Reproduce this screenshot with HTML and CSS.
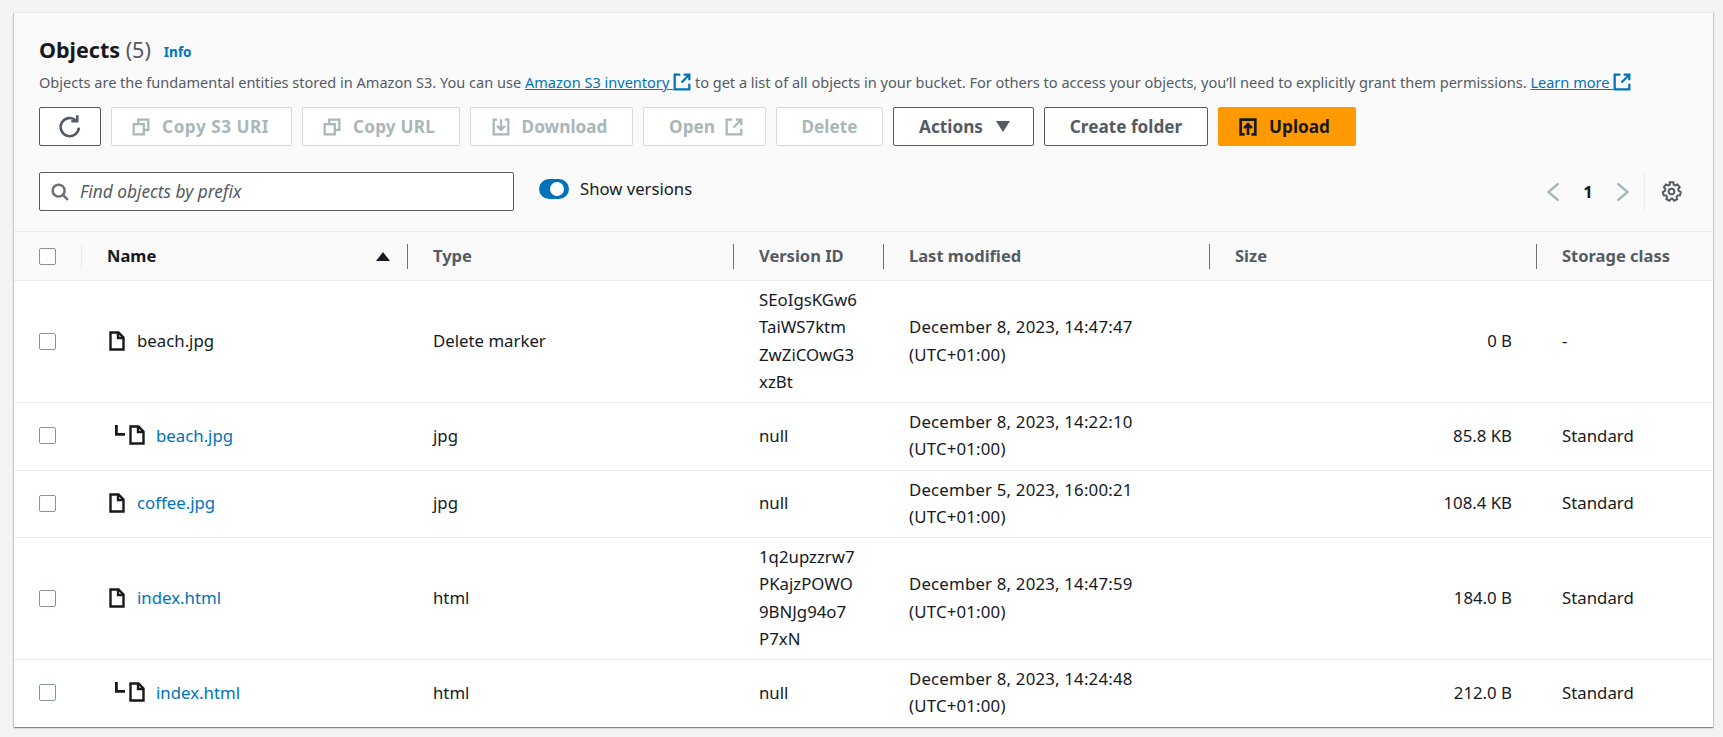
FILE: index.html
```html
<!DOCTYPE html>
<html lang="en">
  <head>
    <meta charset="UTF-8" />
    <meta name="viewport" content="width=device-width, initial-scale=1.0" />
    <title>Objects</title>
    <link rel="stylesheet" href="styles.css">
  </head>
  <body>
    <svg class="sprite" xmlns="http://www.w3.org/2000/svg">
      <symbol id="i-external" viewBox="0 0 16 16"><path d="M14.5 9.5v5h-13v-13h5M9.5 1.5h5v5M14 2L7.5 8.5"/></symbol>
      <symbol id="i-copy" viewBox="0 0 16 16"><path d="M1.5 5.5h9v9h-9zM5.5 5.5v-4h9v9h-4"/></symbol>
      <symbol id="i-download" viewBox="0 0 16 16"><path d="M4.5 1.5h-3v13h13v-13h-3M8 1v9M4.5 7L8 10.5 11.5 7"/></symbol>
      <symbol id="i-upload" viewBox="0 0 16 16"><path d="M5 14.5H1.5v-13h13v13H11M8 15V5.5M4.5 9L8 5.5 11.5 9"/></symbol>
      <symbol id="i-file" viewBox="0 0 16 20"><path d="M1.5 1.5h8l5 5v12h-13zM9 2v5h5.5"/></symbol>
      <symbol id="i-sub" viewBox="0 0 10 11"><path d="M1.4 0v9.4H10"/></symbol>
    </svg>

    <div class="card">
      <div class="card-head">
        <div class="title-row">
          <h1>Objects <span class="count">(5)</span></h1>
          <a class="info">Info</a>
        </div>
        <p class="desc">Objects are the fundamental entities stored in Amazon S3. You can use <a class="link">Amazon S3 inventory <svg class="ext"><use href="#i-external"/></svg></a> to get a list of all objects in your bucket. For others to access your objects, you’ll need to explicitly grant them permissions. <a class="link">Learn more <svg class="ext"><use href="#i-external"/></svg></a></p>

        <div class="toolbar">
          <button class="btn btn-refresh" aria-label="Refresh">
            <svg class="ic" viewBox="0 0 20 20"><path d="M16.8 10.5a7 7 0 1 1-2.3-5.6M15.6 1v4.6H11"/></svg>
          </button>
          <button class="btn off w-s3uri"><svg class="ic"><use href="#i-copy"/></svg>Copy S3 URI</button>
          <button class="btn off w-url"><svg class="ic"><use href="#i-copy"/></svg>Copy URL</button>
          <button class="btn off w-down"><svg class="ic"><use href="#i-download"/></svg>Download</button>
          <button class="btn off w-open">Open<svg class="ic"><use href="#i-external"/></svg></button>
          <button class="btn off w-del">Delete</button>
          <button class="btn w-act">Actions<span class="caret"></span></button>
          <button class="btn w-folder">Create folder</button>
          <button class="btn primary w-up"><svg class="ic"><use href="#i-upload"/></svg>Upload</button>
        </div>

        <div class="filter-row">
          <div class="search">
            <svg class="ic search-ic" viewBox="0 0 16 16"><circle cx="6.8" cy="6.8" r="5.3"/><path d="M10.6 10.6l4.4 4.4"/></svg>
            <span class="placeholder">Find objects by prefix</span>
          </div>
          <div class="toggle"><span class="knob"></span></div>
          <span class="toggle-label">Show versions</span>
          <div class="pager">
            <svg class="chev" viewBox="0 0 14 20"><path d="M12.5 1.5L2.5 10l10 8.5"/></svg>
            <span class="page-num">1</span>
            <svg class="chev" viewBox="0 0 14 20"><path d="M1.5 1.5l10 8.5-10 8.5"/></svg>
            <span class="pager-sep">
              <svg class="gear" viewBox="0 0 20 20"><circle cx="10" cy="10" r="2.7"/><path d="M8.3 1.3h3.4l.4 2.3 1.5.7 2.1-1 2.1 2.5-1.4 1.9.4 1.6 2 1.1-.7 3.2-2.3.2-1 1.3.6 2.3-2.9 1.4-1.4-1.9h-1.6l-1.4 1.9-2.9-1.4.6-2.3-1-1.3-2.3-.2-.7-3.2 2-1.1.4-1.6-1.4-1.9L4.8 3.3l2.1 1 1.5-.7z"/></svg>
            </span>
          </div>
        </div>
      </div>

      <table class="objects">
        <colgroup>
          <col class="c-check"><col class="c-name"><col class="c-type"><col class="c-version"><col class="c-date"><col class="c-size"><col class="c-class">
        </colgroup>
        <thead>
          <tr>
            <th><span class="box"></span></th>
            <th><div class="th-in first sorted">Name<span class="sort-up"></span></div></th>
            <th><div class="th-in">Type</div></th>
            <th><div class="th-in">Version ID</div></th>
            <th><div class="th-in">Last modified</div></th>
            <th><div class="th-in">Size</div></th>
            <th><div class="th-in">Storage class</div></th>
          </tr>
        </thead>
        <tbody>
          <tr>
            <td><span class="box"></span></td>
            <td><div class="name"><svg class="file"><use href="#i-file"/></svg>beach.jpg</div></td>
            <td>Delete marker</td>
            <td>SEoIgsKGw6<br>TaiWS7ktm<br>ZwZiCOwG3<br>xzBt</td>
            <td class="date">December 8, 2023, 14:47:47<br>(UTC+01:00)</td>
            <td class="num">0 B</td>
            <td>-</td>
          </tr>
          <tr>
            <td><span class="box"></span></td>
            <td><div class="name child"><svg class="sub"><use href="#i-sub"/></svg><svg class="file"><use href="#i-file"/></svg><a class="obj">beach.jpg</a></div></td>
            <td>jpg</td>
            <td>null</td>
            <td class="date">December 8, 2023, 14:22:10<br>(UTC+01:00)</td>
            <td class="num">85.8 KB</td>
            <td>Standard</td>
          </tr>
          <tr>
            <td><span class="box"></span></td>
            <td><div class="name"><svg class="file"><use href="#i-file"/></svg><a class="obj">coffee.jpg</a></div></td>
            <td>jpg</td>
            <td>null</td>
            <td class="date">December 5, 2023, 16:00:21<br>(UTC+01:00)</td>
            <td class="num">108.4 KB</td>
            <td>Standard</td>
          </tr>
          <tr>
            <td><span class="box"></span></td>
            <td><div class="name"><svg class="file"><use href="#i-file"/></svg><a class="obj">index.html</a></div></td>
            <td>html</td>
            <td>1q2upzzrw7<br>PKajzPOWO<br>9BNJg94o7<br>P7xN</td>
            <td class="date">December 8, 2023, 14:47:59<br>(UTC+01:00)</td>
            <td class="num">184.0 B</td>
            <td>Standard</td>
          </tr>
          <tr>
            <td><span class="box"></span></td>
            <td><div class="name child"><svg class="sub"><use href="#i-sub"/></svg><svg class="file"><use href="#i-file"/></svg><a class="obj">index.html</a></div></td>
            <td>html</td>
            <td>null</td>
            <td class="date">December 8, 2023, 14:24:48<br>(UTC+01:00)</td>
            <td class="num">212.0 B</td>
            <td>Standard</td>
          </tr>
        </tbody>
      </table>
    </div>
  </body>
</html>
```

FILE: styles.css
```css
* {
  box-sizing: border-box;
}

html,
body {
  height: 100%;
}

body {
  margin: 0;
  padding: 12px 10px 0 14px;
  background-color: #f2f3f3;
  color: #16191f;
  font-family: "Noto Sans", "Open Sans", sans-serif;
  font-size: 16px;
  overflow: hidden;
}

.sprite {
  width: 0;
  height: 0;
  display: block;
}

.sprite path {
  fill: none;
  stroke: currentColor;
  stroke-width: 2;
}

#i-upload path {
  stroke-width: 2.4;
}

#i-file path {
  stroke-width: 2.4;
}

#i-sub path {
  stroke-width: 2.8;
}

.card {
  background-color: #fafafa;
  box-shadow: 0 1px 1px 0 rgba(0, 28, 36, 0.3), 1px 1px 1px 0 rgba(0, 28, 36, 0.15), -1px 1px 1px 0 rgba(0, 28, 36, 0.15);
  border-top: 1px solid #eaeded;
}

.card-head {
  padding: 24px 25px 20px;
}

.title-row {
  display: flex;
  align-items: center;
  height: 26px;
}

h1 {
  margin: 0;
  font-size: 21.5px;
  font-weight: 700;
  line-height: 26px;
}

.count {
  color: #545b64;
  font-weight: 400;
}

.info {
  margin-left: 13px;
  margin-top: 3px;
  color: #0073bb;
  font-size: 13.5px;
  font-weight: 700;
}

.desc {
  margin: 9px 0 0;
  height: 20px;
  color: #545b64;
  font-size: 14.56px;
  line-height: 20px;
  white-space: nowrap;
}

.link {
  color: #0073bb;
  text-decoration: underline;
}

.ext {
  width: 18px;
  height: 18px;
  vertical-align: -3px;
  color: #0073bb;
}

.toolbar {
  display: flex;
  gap: 10px;
  margin-top: 15px;
}

.btn {
  display: flex;
  align-items: center;
  justify-content: center;
  gap: 12px;
  height: 39px;
  padding: 0;
  border: 1px solid #545b64;
  border-radius: 2px;
  background-color: #ffffff;
  color: #545b64;
  font-family: inherit;
  font-size: 17.2px;
  font-weight: 700;
}

.btn-refresh {
  width: 62px;
}

.w-s3uri { width: 181px; letter-spacing: 0.5px; padding-right: 2px; }
.w-url { width: 158px; letter-spacing: 0.2px; padding-right: 4px; }
.w-down { width: 163px; padding-right: 4px; }
.w-open { width: 123px; padding-left: 3px; gap: 10px; }
.w-del { width: 107px; }
.w-act { width: 141px; gap: 13px; padding-left: 2px; }
.w-folder { width: 164px; }
.w-up { width: 138px; padding-right: 5px; }

.off {
  border-color: #d5dbdb;
  color: #aab7b8;
}

.primary {
  border-color: #ff9900;
  background-color: #ff9900;
  color: #16191f;
}

.ic {
  width: 18px;
  height: 18px;
  fill: none;
  stroke: currentColor;
  stroke-width: 2;
}

.btn-refresh .ic {
  width: 26px;
  height: 26px;
}

.caret {
  width: 0;
  height: 0;
  border-left: 7px solid transparent;
  border-right: 7px solid transparent;
  border-top: 11px solid #545b64;
}

.filter-row {
  display: flex;
  align-items: center;
  margin-top: 26px;
  height: 39px;
}

.search {
  display: flex;
  align-items: center;
  width: 475px;
  height: 39px;
  padding-left: 11px;
  border: 1px solid #545b64;
  border-radius: 2px;
  background-color: #ffffff;
}

.search-ic {
  width: 18px;
  height: 18px;
  color: #687078;
  stroke-width: 2.2;
}

.placeholder {
  margin-left: 11px;
  color: #545b64;
  font-size: 17.3px;
  font-style: italic;
}

.toggle {
  display: flex;
  align-items: center;
  justify-content: flex-end;
  width: 30px;
  height: 20px;
  margin-left: 25px;
  margin-bottom: 6px;
  padding-right: 5px;
  border-radius: 10px;
  background-color: #0073bb;
}

.knob {
  width: 14px;
  height: 14px;
  border-radius: 50%;
  background-color: #ffffff;
}

.toggle-label {
  margin-left: 11px;
  margin-bottom: 7px;
  font-size: 16.7px;
}

.pager {
  display: flex;
  align-items: center;
  margin-left: auto;
  height: 39px;
  margin-right: 6px;
}

.chev {
  width: 14px;
  height: 20px;
  fill: none;
  stroke: #aab7b8;
  stroke-width: 2.4;
}

.page-num {
  width: 56px;
  text-align: center;
  font-size: 16.5px;
  font-weight: 700;
}

.pager-sep {
  display: flex;
  align-items: center;
  height: 39px;
  margin-left: 14px;
  padding-left: 16px;
  border-left: 1px solid #eaeded;
}

.gear {
  width: 21px;
  height: 21px;
  fill: none;
  stroke: #545b64;
  stroke-width: 1.9;
}

.objects {
  width: 100%;
  border-collapse: collapse;
  table-layout: fixed;
  background-color: #ffffff;
}

.c-check { width: 67px; }
.c-name { width: 326px; }
.c-type { width: 326px; }
.c-version { width: 150px; }
.c-date { width: 326px; }
.c-size { width: 327px; }
.c-class { width: 177px; }

th {
  height: 49px;
  padding: 0;
  border-top: 1px solid #eaeded;
  border-bottom: 1px solid #eaeded;
  background-color: #fafafa;
  color: #545b64;
  font-size: 16.5px;
  font-weight: 700;
  text-align: left;
}

.th-in {
  display: flex;
  align-items: center;
  height: 25px;
  padding-left: 25px;
  padding-bottom: 2px;
  border-left: 1px solid #687078;
}

.th-in.first {
  justify-content: space-between;
  padding-right: 17px;
  border-left-color: #eaeded;
}

.sorted {
  color: #16191f;
}

.sort-up {
  width: 0;
  height: 0;
  margin-top: 2px;
  border-left: 7px solid transparent;
  border-right: 7px solid transparent;
  border-bottom: 9px solid #16191f;
}

td {
  padding: 5px 24px 7px 26px;
  border-bottom: 1px solid #eaeded;
  font-size: 16.8px;
  line-height: 27.25px;
  color: #16191f;
  vertical-align: middle;
}

.date {
  letter-spacing: 0.2px;
}

tr:last-child td {
  border-bottom: none;
}

th:first-child,
td:first-child {
  padding-left: 25px;
  padding-right: 0;
}

.box {
  display: block;
  width: 17px;
  height: 17px;
  margin-top: 1px;
  border: 1px solid #879596;
  border-radius: 2px;
  background-color: #ffffff;
}

th .box {
  margin-top: 0;
}

.num {
  text-align: right;
}

.name {
  display: flex;
  align-items: center;
  padding-left: 2px;
}

.name.child {
  padding-left: 8px;
}

.file {
  width: 16px;
  height: 20px;
  margin-right: 12px;
  flex-shrink: 0;
}

.name.child .file {
  margin-right: 11px;
}

.sub {
  width: 10px;
  height: 11px;
  margin-right: 4px;
  margin-bottom: 9px;
  flex-shrink: 0;
}

.obj {
  color: #0073bb;
}
```
